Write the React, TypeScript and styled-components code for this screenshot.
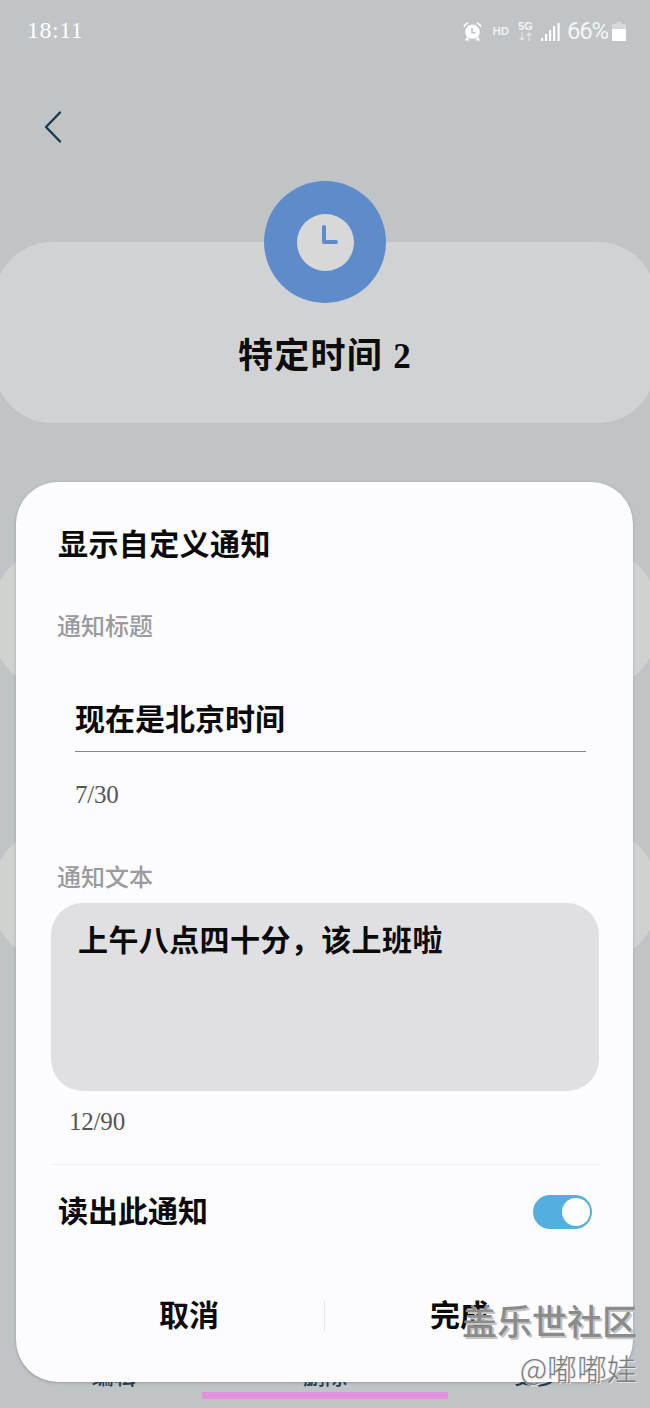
import React from 'react';
import styled, { createGlobalStyle } from 'styled-components';

const GlobalStyle = createGlobalStyle`
  html, body {
    margin: 0;
    padding: 0;
    background: #c0c4c7;
  }
  * {
    box-sizing: border-box;
  }
`;

const SERIF = `"Liberation Serif", "Noto Sans CJK SC", serif`;

const App: React.FC = () => (
  <Screen>
    <GlobalStyle />
    <StatusBar>
      <Clock>18:11</Clock>
      <StatusIcons>
        <svg width="19" height="20" viewBox="0 0 19 20" fill="#fff">
          <path d="M9.500 3.500a7.300 7.300 0 1 0 0 14.600 7.300 7.300 0 0 0 0-14.600z" />
          <path d="M1 6.500 0.500 4.500 4 1.200l1.500 0.800zM18 6.500l0.500-2L15 1.200l-1.500 0.800z" />
          <path d="M9 7v4.800h3.600" fill="none" stroke="#c0c4c7" strokeWidth="1.600" />
          <path d="M4 15.500 2 19.500h4.500zM15 15.500l2 4h-4.500z" />
        </svg>
        <HdMark>HD</HdMark>
        <NetworkMark>
          <span>5G</span>
          <svg width="15" height="9" viewBox="0 0 15 9" fill="none" stroke="#e3e5e6" strokeWidth="1.200">
            <path d="M4 0v8M1.500 5.500 4 8l2.500-2.500M11 9V1M8.500 3.500 11 1l2.500 2.500" />
          </svg>
        </NetworkMark>
        <svg width="19" height="19" viewBox="0 0 19 19" fill="#fff">
          <rect x="0" y="16" width="2.200" height="3" />
          <rect x="4" y="12" width="2.200" height="7" />
          <rect x="8" y="8" width="2.200" height="11" />
          <rect x="12" y="4" width="2.200" height="15" />
          <rect x="16.500" y="1" width="2.200" height="18" />
        </svg>
        <Battery>66%</Battery>
        <svg width="14" height="19" viewBox="0 0 14 19">
          <path d="M4.500 0h5v2H13a1 1 0 0 1 1 1v15a1 1 0 0 1-1 1H1a1 1 0 0 1-1-1V3a1 1 0 0 1 1-1h3.500z" fill="#d6d8da" />
          <path d="M0 7h14v11a1 1 0 0 1-1 1H1a1 1 0 0 1-1-1z" fill="#fff" />
        </svg>
      </StatusIcons>
    </StatusBar>

    <BackButton>
      <svg width="18" height="32" viewBox="0 0 18 32" fill="none" stroke="#1e3a4a" strokeWidth="2.400" strokeLinecap="round" strokeLinejoin="round">
        <path d="M16 1.500 2 16l14 14.500" />
      </svg>
    </BackButton>

    <Hero>
      <HeroCard>
        <HeroTitle>特定时间 2</HeroTitle>
      </HeroCard>
      <ClockBadge>
        <ClockFace>
          <svg width="18" height="22" viewBox="0 0 18 22" fill="none" stroke="#5e8ccb" strokeWidth="4" strokeLinecap="round" strokeLinejoin="round">
            <path d="M3 3v15h12" />
          </svg>
        </ClockFace>
      </ClockBadge>
    </Hero>

    <GhostCard $top={127} $height={138} />
    <GhostCard $top={142} $height={130} />

    <TabBar>
      <Tab>编辑</Tab>
      <Tab>删除</Tab>
      <Tab>更多</Tab>
    </TabBar>

    <Modal>
      <ModalTitle>显示自定义通知</ModalTitle>
      <FieldLabel $top={43}>通知标题</FieldLabel>
      <TitleInput>现在是北京时间</TitleInput>
      <Counter $left={59} $top={25}>7/30</Counter>
      <FieldLabel $top={48}>通知文本</FieldLabel>
      <TextArea>上午八点四十分，该上班啦</TextArea>
      <Counter $left={53} $top={13}>12/90</Counter>
      <Rule />
      <SwitchRow>
        <RowLabel>读出此通知</RowLabel>
        <Toggle>
          <Knob />
        </Toggle>
      </SwitchRow>
      <Actions>
        <ActionButton>取消</ActionButton>
        <ActionDivider />
        <ActionButton>完成</ActionButton>
      </Actions>
    </Modal>

    <HomeHandle />
    <Watermark>
      <WatermarkBrand>盖乐世社区</WatermarkBrand>
      <WatermarkUser>@嘟嘟娃</WatermarkUser>
    </Watermark>
  </Screen>
);

const Screen = styled.div`
  position: relative;
  width: 650px;
  height: 1408px;
  overflow: hidden;
  display: flex;
  flex-direction: column;
  background: #c0c4c7;
  font-family: ${SERIF};
`;

const StatusBar = styled.div`
  height: 60px;
  padding: 16px 24px 0 27px;
  display: flex;
  justify-content: space-between;
  align-items: flex-start;
  color: #fff;
`;

const Clock = styled.div`
  font-size: 24px;
  line-height: 28px;
  letter-spacing: 0.5px;
`;

const StatusIcons = styled.div`
  display: flex;
  align-items: center;
  height: 28px;
  margin-top: 1px;

  > svg:first-child {
    margin-right: 10px;
  }
`;

const HdMark = styled.span`
  font: 700 11.5px/14px "Liberation Sans", sans-serif;
  color: #eceef0;
  margin-right: 9px;
`;

const NetworkMark = styled.div`
  display: flex;
  flex-direction: column;
  align-items: center;
  margin-right: 8px;
  font: 700 11px/11px "Liberation Sans", sans-serif;
  color: #f3f4f5;

  svg {
    display: block;
  }
`;

const Battery = styled.span`
  font: 400 24px/28px Roboto, sans-serif;
  letter-spacing: -1.2px;
  margin-left: 7px;
  margin-right: 4px;
  color: #f4f5f6;
`;

const BackButton = styled.div`
  height: 32px;
  margin: 51px 0 0 44px;

  svg {
    display: block;
  }
`;

const Hero = styled.div`
  position: relative;
  margin: 0 -6px;
  padding-top: 99px;
`;

const HeroCard = styled.div`
  height: 181px;
  border-radius: 58px;
  background: #d1d2d3;
  padding-top: 90px;
  text-align: center;
`;

const HeroTitle = styled.div`
  font-size: 35px;
  line-height: 50px;
  font-weight: 700;
  letter-spacing: 1.3px;
  color: #0c0c0c;
`;

const ClockBadge = styled.div`
  position: absolute;
  left: 270px;
  top: 38px;
  width: 122px;
  height: 122px;
  border-radius: 50%;
  background: #5e8ccb;
  display: flex;
  align-items: center;
  justify-content: center;
`;

const ClockFace = styled.div`
  width: 57px;
  height: 57px;
  border-radius: 50%;
  background: #d8d8d8;
  display: flex;
  align-items: flex-start;
  justify-content: center;
  padding: 10px 0 0 10px;
`;

const GhostCard = styled.div<{ $top: number; $height: number }>`
  flex: none;
  margin: ${(props) => props.$top}px -6px 0;
  height: ${(props) => props.$height}px;
  border-radius: 56px;
  background: #d0d2d0;
`;

const TabBar = styled.div`
  margin-top: auto;
  height: 46px;
  padding: 0 8px 16px;
  display: grid;
  grid-template-columns: 1fr 1fr 1fr;
  justify-items: center;
  align-items: center;
`;

const Tab = styled.div`
  font-size: 22px;
  line-height: 26px;
  font-weight: 500;
  color: #1f3a4d;
`;

const Modal = styled.div`
  position: absolute;
  left: 16px;
  top: 482px;
  width: 617px;
  height: 900px;
  border-radius: 42px;
  background: #fcfcfe;
  box-shadow: 0 1px 3px rgba(70, 75, 80, 0.35);
  padding-top: 41px;
  display: flex;
  flex-direction: column;
`;

const ModalTitle = styled.div`
  margin-left: 42px;
  font-size: 30px;
  line-height: 44px;
  font-weight: 700;
  letter-spacing: 0.4px;
  color: #0a0a0a;
`;

const FieldLabel = styled.div<{ $top: number }>`
  margin: ${(props) => props.$top}px 0 0 41px;
  font-size: 24px;
  line-height: 34px;
  font-weight: 500;
  color: #9a9a9f;
`;

const TitleInput = styled.div`
  margin: 59px 47px 0 59px;
  height: 49px;
  padding-top: 7px;
  border-bottom: 1.5px solid #85858a;
  font-size: 30px;
  line-height: 20px;
  font-weight: 700;
  color: #0a0a0a;
`;

const Counter = styled.div<{ $left: number; $top: number }>`
  margin: ${(props) => props.$top}px 0 0 ${(props) => props.$left}px;
  font-size: 25px;
  line-height: 36px;
  letter-spacing: -0.2px;
  color: #555558;
`;

const TextArea = styled.div`
  margin: 8px 34px 0 35px;
  height: 188px;
  border-radius: 32px;
  background: #e0e0e3;
  padding: 16px 0 0 27px;
  font-size: 30px;
  line-height: 44px;
  font-weight: 700;
  letter-spacing: 0.4px;
  color: #0a0a0a;
`;

const Rule = styled.div`
  margin: 24px 34px 0 35px;
  height: 1px;
  background: #f0f0f3;
`;

const SwitchRow = styled.div`
  margin: 30px 41px 0 42px;
  height: 34px;
  display: flex;
  align-items: center;
  justify-content: space-between;
`;

const RowLabel = styled.div`
  font-size: 30px;
  line-height: 34px;
  font-weight: 700;
  color: #0a0a0a;
`;

const Toggle = styled.div`
  width: 59px;
  height: 34px;
  border-radius: 17px;
  background: #55aee0;
  padding: 3px 2px;
  display: flex;
  justify-content: flex-end;
`;

const Knob = styled.div`
  width: 28px;
  height: 28px;
  border-radius: 50%;
  background: #fdfdfe;
`;

const Actions = styled.div`
  margin-top: 72px;
  height: 30px;
  padding: 0 38px;
  display: flex;
  align-items: center;
`;

const ActionButton = styled.div`
  flex: 1;
  text-align: center;
  font-size: 30px;
  line-height: 30px;
  font-weight: 700;
  color: #0a0a0a;
`;

const ActionDivider = styled.div`
  width: 1px;
  height: 30px;
  background: #e6e6e9;
`;

const HomeHandle = styled.div`
  position: absolute;
  left: 202px;
  bottom: 9px;
  width: 246px;
  height: 7px;
  background: #e590df;
`;

const Watermark = styled.div`
  position: absolute;
  right: 13px;
  top: 1298px;
  display: flex;
  flex-direction: column;
  align-items: flex-end;
  font-family: "Noto Sans CJK SC", sans-serif;
`;

const WatermarkBrand = styled.div`
  font-size: 35px;
  line-height: 44px;
  font-weight: 500;
  color: #8b8b8b;
  text-shadow: 2px 2px 0 #c4c4c4;
`;

const WatermarkUser = styled.div`
  margin-top: 6px;
  font-size: 30px;
  line-height: 38px;
  font-weight: 300;
  color: #7d7d7d;
  text-shadow: 1px 1px 0 #e4e4e4;
`;

export default App;
